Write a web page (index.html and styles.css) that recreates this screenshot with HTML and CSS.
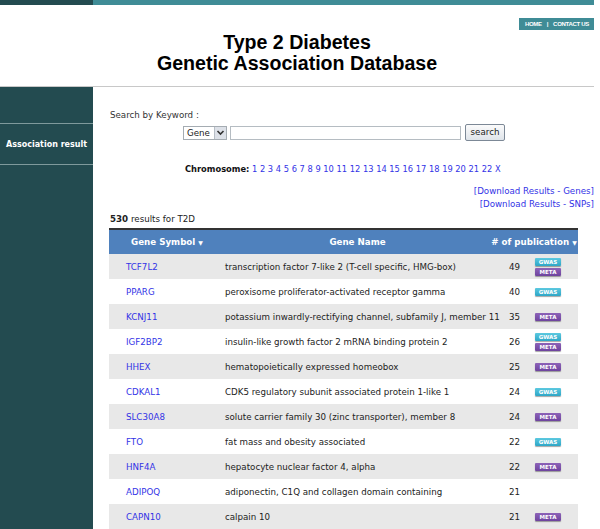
FILE: index.html
```html
<!DOCTYPE html>
<html>
<head>
<meta charset="utf-8">
<link rel="stylesheet" href="styles.css">
</head>
<body>
<div class="page">
  <div class="topbar"><div class="tb-dark"></div><div class="tb-teal"></div></div>
  <div class="header">
    <div class="nav"><a>HOME</a><span class="sep">|</span><a>CONTACT US</a></div>
    <h1 class="title">Type 2 Diabetes<br>Genetic Association Database</h1>
  </div>
  <div class="layout">
    <div class="sidebar">
      <div class="side-blank"></div>
      <div class="side-item">Association result</div>
      <div class="side-rest"></div>
    </div>
    <div class="main">
      <div class="search-label">Search by Keyword :</div>
      <div class="search-row">
        <div class="select"><span class="sel-text">Gene</span><span class="sel-btn"><svg width="9" height="7" viewBox="0 0 9 7"><path d="M1.5 2 L4.5 5 L7.5 2" fill="none" stroke="#333" stroke-width="1.6"/></svg></span></div>
        <div class="textbox"></div>
        <div class="btn">search</div>
      </div>
      <div class="chrom"><b>Chromosome:</b> <a>1</a> <a>2</a> <a>3</a> <a>4</a> <a>5</a> <a>6</a> <a>7</a> <a>8</a> <a>9</a> <a>10</a> <a>11</a> <a>12</a> <a>13</a> <a>14</a> <a>15</a> <a>16</a> <a>17</a> <a>18</a> <a>19</a> <a>20</a> <a>21</a> <a>22</a> <a>X</a></div>
      <div class="downloads">
        <a>[Download Results - Genes]</a>
        <a>[Download Results - SNPs]</a>
      </div>
      <div class="count"><b>530</b> results for T2D</div>
      <table class="results">
        <colgroup><col class="w-sym"><col class="w-name"><col class="w-num"><col class="w-badge"></colgroup>
        <thead>
          <tr><th class="c-sym">Gene Symbol <span class="arr">&#9660;</span></th><th class="c-name">Gene Name</th><th class="c-pub" colspan="2"># of publication <span class="arr">&#9660;</span></th></tr>
        </thead>
        <tbody>
          <tr><td class="c-sym"><a>TCF7L2</a></td><td class="c-name">transcription factor 7-like 2 (T-cell specific, HMG-box)</td><td class="c-num">49</td><td class="c-badge"><span class="badge gwas">GWAS</span><span class="badge meta">META</span></td></tr>
          <tr><td class="c-sym"><a>PPARG</a></td><td class="c-name">peroxisome proliferator-activated receptor gamma</td><td class="c-num">40</td><td class="c-badge"><span class="badge gwas">GWAS</span></td></tr>
          <tr><td class="c-sym"><a>KCNJ11</a></td><td class="c-name">potassium inwardly-rectifying channel, subfamily J, member 11</td><td class="c-num">35</td><td class="c-badge"><span class="badge meta">META</span></td></tr>
          <tr><td class="c-sym"><a>IGF2BP2</a></td><td class="c-name">insulin-like growth factor 2 mRNA binding protein 2</td><td class="c-num">26</td><td class="c-badge"><span class="badge gwas">GWAS</span><span class="badge meta">META</span></td></tr>
          <tr><td class="c-sym"><a>HHEX</a></td><td class="c-name">hematopoietically expressed homeobox</td><td class="c-num">25</td><td class="c-badge"><span class="badge meta">META</span></td></tr>
          <tr><td class="c-sym"><a>CDKAL1</a></td><td class="c-name">CDK5 regulatory subunit associated protein 1-like 1</td><td class="c-num">24</td><td class="c-badge"><span class="badge gwas">GWAS</span></td></tr>
          <tr><td class="c-sym"><a>SLC30A8</a></td><td class="c-name">solute carrier family 30 (zinc transporter), member 8</td><td class="c-num">24</td><td class="c-badge"><span class="badge meta">META</span></td></tr>
          <tr><td class="c-sym"><a>FTO</a></td><td class="c-name">fat mass and obesity associated</td><td class="c-num">22</td><td class="c-badge"><span class="badge gwas">GWAS</span></td></tr>
          <tr><td class="c-sym"><a>HNF4A</a></td><td class="c-name">hepatocyte nuclear factor 4, alpha</td><td class="c-num">22</td><td class="c-badge"><span class="badge meta">META</span></td></tr>
          <tr><td class="c-sym"><a>ADIPOQ</a></td><td class="c-name">adiponectin, C1Q and collagen domain containing</td><td class="c-num">21</td><td class="c-badge"></td></tr>
          <tr><td class="c-sym"><a>CAPN10</a></td><td class="c-name">calpain 10</td><td class="c-num">21</td><td class="c-badge"><span class="badge meta">META</span></td></tr>
        </tbody>
      </table>
    </div>
  </div>
</div>
</body>
</html>
```

FILE: styles.css
```css
html, body { margin: 0; padding: 0; background: #fff; }
body { font-family: "DejaVu Sans", Verdana, sans-serif; font-size: 8.7px; color: #222; overflow: hidden; }
a { color: #3333e6; text-decoration: none; }
.page { width: 594px; }
.topbar { display: flex; height: 5px; }
.tb-dark { width: 93px; background: #234b50; }
.tb-teal { flex: 1; background: #3f8c96; }
.header { height: 81px; border-bottom: 1px solid #c8c8c8; display: flex; flex-direction: column; align-items: stretch; }
.nav { align-self: flex-end; margin-top: 13px; background: #3f8c96; color: #fff; font-size: 6px; height: 12px; line-height: 12px; padding: 0 5px 0 6px; display: flex; gap: 5px; font-family: "Liberation Sans", Arial, sans-serif; font-weight: bold; letter-spacing: -0.3px; }
.nav a { color: #fff; }
.title { margin: 0; margin-top: 2px; text-align: center; font-family: "Liberation Sans", Arial, sans-serif; font-weight: bold; font-size: 19.6px; line-height: 21px; color: #000; }
.layout { display: flex; min-height: 443px; }
.sidebar { width: 93px; background: #234b50; display: flex; flex-direction: column; }
.side-blank { height: 36px; border-bottom: 1px solid #7f9a9c; }
.side-item { height: 40px; border-bottom: 1px solid #7f9a9c; color: #fff; font-weight: bold; font-size: 8px; display: flex; align-items: center; padding-left: 6px; }
.main { flex: 1; padding-left: 17px; }
.search-label { margin-top: 23px; color: #333; }
.search-row { display: flex; align-items: center; margin-top: 4px; margin-left: 73px; }
.select { width: 44px; height: 14px; border: 1px solid #a5acb2; display: flex; align-items: center; justify-content: space-between; box-sizing: border-box; }
.sel-text { padding-left: 3px; color: #222; }
.sel-btn { width: 11px; height: 12px; background: #dde1e8; border-left: 1px solid #b7bec6; display: flex; align-items: center; justify-content: center; }
.textbox { width: 231px; height: 14px; border: 1px solid #b5bcc2; margin-left: 3px; box-sizing: border-box; }
.btn { margin-left: 4px; width: 40px; height: 17px; box-sizing: border-box; border: 1px solid #7c8896; border-radius: 2px; background: linear-gradient(#fbfbfb, #dfe4ea); text-align: center; line-height: 15px; color: #222; }
.chrom { margin-top: 23px; margin-left: 75px; font-size: 8.3px; }
.chrom b { color: #111; }
.downloads { display: flex; flex-direction: column; align-items: flex-end; margin-top: 11px; line-height: 13px; }
.count { margin-top: 3px; }
.results { border-collapse: collapse; width: 469px; margin-top: 4px; margin-left: -1px; table-layout: fixed; }
.w-sym { width: 116px; }
.w-name { width: 265px; }
.w-num { width: 45px; }
.w-badge { width: 43px; }
.results thead th { background: #4f81bd; color: #fff; font-weight: bold; height: 24px; border-top: 2px solid #333; padding: 0; white-space: nowrap; }
.results td { height: 25px; padding: 0; white-space: nowrap; }
.results tbody tr:nth-child(odd) td { background: #e8e8e8; }
td.c-sym { padding-left: 17px; }
th.c-name { text-align: center; }
td.c-name { color: #222; }
td.c-num { text-align: right; padding-right: 15px; }
.arr { font-size: 6px; }
.badge { display: block; width: 26px; height: 8px; line-height: 8px; font-size: 5.5px; color: #fff; text-align: center; font-weight: bold; border-radius: 1px; margin: 2px 0; box-shadow: 0 1px 1px rgba(0,0,0,0.35); }
.gwas { background: linear-gradient(#5cc9e0, #2ea6c6); }
.meta { background: linear-gradient(#8d63b8, #6e439e); }
```
